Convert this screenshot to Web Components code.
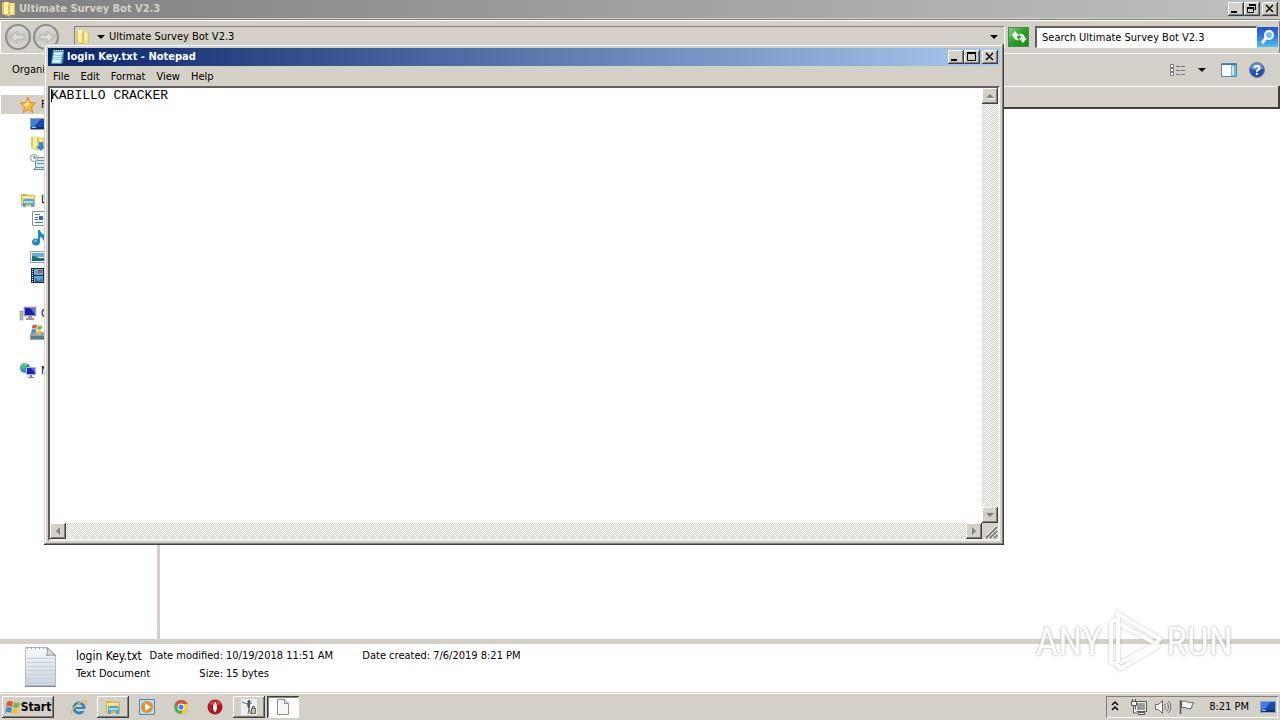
<!DOCTYPE html>
<html lang="en">
<head>
<meta charset="utf-8">
<title>Desktop</title>
<style>
html,body{margin:0;height:100%}
body{font:11px/14px "DejaVu Sans Condensed","Noto Sans",sans-serif;color:#000;background:#fff;overflow:hidden}
</style>
</head>
<body>
<survey-desktop></survey-desktop>
<script>
const FACE='#d4d0c8';
const RAISED='box-shadow:inset -1px -1px #404040,inset 1px 1px #fff,inset -2px -2px #808080;background:'+FACE+';';
const folder='<path fill="#e8c659" d="M1 2l6-1v14l-6-2z"/><path fill="#fbefad" d="M3 1h5v12H3z"/><path fill="#f3dc7c" d="M7 2h7v12H7z"/><path fill="#e3c25a" d="M7 2l2 1v13l-2-1zM13 3h1v11h-1z"/><path fill="#fff6cc" d="M10 4h2v7h-2z"/>';
const library='<path fill="#d9b64a" d="M1 2h6l1 1h7v11H1z"/><path fill="#f9e995" d="M2 4h12v8H2z"/><path fill="#efd566" d="M2 6h12v2H2z"/><path fill="#4da6d8" d="M3 15V9q0-2 2-2h7q2 0 2 2v6h-3v-3H6v3z"/><path fill="#a9def6" d="M4 9h9v2H4z"/>';
const monitor='<path fill="#8ba6c9" d="M0 2h16v12H0z"/><path fill="#1949ad" d="M1 3h14v9H1z"/><path fill="#3c7fe0" d="M1 3h10L3 12H1z"/><path fill="#142d66" d="M1 11h14v2H1z"/><path fill="#9cd0ff" d="M2 11h4v1H2z"/>';
const flagWin='<path fill="#e8542a" d="M2 3q3-2 6 0L7 8Q4 6 1 8z"/><path fill="#7bbb3b" d="M9 3q3 2 6 0l-1 5q-3 2-6 0z"/><path fill="#3d8ddd" d="M1 9q3-2 6 0l-1 5q-3-2-6 0z"/><path fill="#f6c22e" d="M8 9q3 2 6 0l-1 5q-3 2-6 0z"/>';
const ICONS={
 folder,library,monitor,start:flagWin,
 note:'<path fill="#4b98a9" d="M3 1h11l-1 14H1z"/><path fill="#b9e6ee" d="M4 3h9l-1 11H2z"/><path fill="#e3f8fa" d="M5 4h5L9 13H3z"/><path stroke="#8fcbd6" d="M4 6.500h8M4 8.500h8M3 10.500h8"/><path stroke="#fff" stroke-dasharray="1 1" d="M4 1.500h10"/><path fill="#376c88" d="M13 4h1l-1 11h-2z"/>',
 min:'<path fill="#000" d="M3 9h6v2H3z"/>',
 max:'<path fill="none" stroke="#000" d="M3.500 2.500h8v8h-8z"/><path fill="#000" d="M3 2h9v2H3z"/>',
 restore:'<path fill="none" stroke="#000" d="M5.500 2.500h6v5h-2M3.500 5.500h6v5h-6z"/><path fill="#000" d="M5 2h7v2H5zM3 5h7v2H3z"/>',
 close:'<path fill="none" stroke="#000" stroke-width="1.500" d="M4 3l7 7M11 3l-7 7"/>',
 down:'<path fill="#000" d="M4 6h8l-4 4z"/>',
 sup:'<path fill="#808080" d="M4 10h8L8 6z"/><path stroke="#fff" d="M5 10.500h8"/>',
 sdown:'<path fill="#808080" d="M4 6h8l-4 4z"/>',
 sleft:'<path fill="#808080" d="M10 4v8L6 8z"/>',
 sright:'<path fill="#808080" d="M6 4v8l4-4z"/>',
 back:'<path fill="#dddcda" stroke="#b4b2ae" d="M1 8l6-6v4h7v4H7v4z"/>',
 fwd:'<path fill="#dddcda" stroke="#b4b2ae" d="M15 8L9 2v4H2v4h7v4z"/>',
 refresh:'<path fill="#fff" d="M0 7l4-5 4 5H6q0 3 3 4-6 1-7-4zM16 9l-4 5-4-5h2q0-3-3-4 6-1 7 4z"/>',
 search:'<circle cx="9" cy="6" r="4" fill="#7dbbf2" stroke="#fff" stroke-width="2"/><path stroke="#fff" stroke-width="3" d="M6 9l-4 5"/>',
 views:'<path fill="#fff" stroke="#777" d="M.5 2.500h3v3h-3zM.5 6.500h3v3h-3zM.5 10.500h3v3h-3z"/><path stroke="#68798c" stroke-dasharray="4 1" d="M6 4.500h9M6 8.500h9M6 12.500h9"/>',
 pane:'<path fill="#fff" stroke="#5683ad" d="M.5 1.500h15v13H.5z"/><path fill="#3f79b2" d="M1 2h14v1H1z"/><path fill="#73b9dc" d="M10 3h5v11h-5z"/><path fill="#c7e8f5" d="M11 4h2v9h-2z"/>',
 help:'<circle cx="8" cy="8" r="7.500" fill="#2452b4" stroke="#777f9a"/><path fill="#6b95df" d="M2 7a6 6 0 0112 0q-6 2-12 0z"/><path fill="none" stroke="#fff" stroke-width="2" d="M5.500 6q0-2 2.500-2t2.500 2q0 1-1.500 2t-1 2"/><path fill="#fff" d="M7 11h2v2H7z"/>',
 star:'<path fill="#fcc02e" stroke="#e1812b" d="M8 .5l2.200 5 5.300.5-4 4 1.200 5.500L8 12.500l-4.700 3L4.500 10 .5 6l5.300-.5z"/><path fill="#fff0a0" d="M8 3l1 4-3 3-3-3 3-.5z"/>',
 download:folder+'<path fill="#2f8bd2" d="M9 7h4v4h3l-5 5-5-5h3z"/>',
 recent:'<path fill="#d8e6ee" stroke="#6e8493" d="M5.500 3.500h10v9h2v3h-14q3-2 2-4z"/><path stroke="#4d9cc5" d="M7 6.500h7M7 9.500h7M6 13.500h8"/><circle cx="4" cy="4" r="3.500" fill="#f4f8fb" stroke="#8796a5"/><path fill="none" stroke="#555" d="M4 2v2h2"/>',
 doc:'<path fill="#fff" stroke="#7f91b0" d="M2.500 .5h12v14h-12z"/><path stroke="#4b73b4" d="M5 3.500h5M5 6.500h3M5 8.500h3M5 11.500h8"/><path fill="#3567b5" d="M9 5h4v4H9z"/>',
 music:'<ellipse cx="6" cy="12" rx="4" ry="3.500" fill="#2388cc"/><path fill="#2388cc" d="M8 12V0h2q1 4 5 5 2 4-1 8 0-5-4-6v5z"/><path fill="#8fd3f5" d="M4 11q1-2 3-1l-2 2z"/>',
 pic:'<path fill="#fff" stroke="#8aa2b6" d="M.5 2.500h17v11H.5z"/><path fill="#5fb4e6" d="M2 4h14v4H2z"/><path fill="#27785b" d="M2 7q4 0 7 2h7v3H2z"/><path fill="#215f9d" d="M2 10q6-1 14 0v2H2z"/>',
 video:'<path fill="#182c43" d="M1 0h15v15H1z"/><path fill="#68a9d7" d="M4 1h9v6H4zM4 8h9v6H4z"/><path fill="#a95345" d="M8 2h4v3H8z"/><path fill="#2f6fb2" d="M5 9l3 4 4-3v4H5z"/><path stroke="#fff" stroke-dasharray="1 1" d="M2.500 1v13M14.500 1v13"/>',
 computer:'<path fill="#9fb0cf" stroke="#5c6f98" stroke-width=".5" d="M4 1h12v9H4z"/><path fill="#1a1fa6" d="M5 2h10v7H5z"/><path fill="#5c70df" d="M10 2h5v6z"/><path fill="#9a9c9c" d="M8 10h4v2h2v2H6v-2h2z"/><path fill="#aab9a8" stroke="#738070" stroke-width=".5" d="M0 5h3v9H0z"/>',
 disk:'<path fill="#9ba5a8" d="M0 9l2-2h13l2 2v6H0z"/><path fill="#517f8c" d="M1 11h15v3H1z"/><g transform="translate(1 -2) scale(.75)">'+flagWin+'</g>',
 net:'<circle cx="5" cy="5" r="5" fill="#2492c4"/><path fill="#5fbf61" d="M2 1q3-2 5 0L5 5 1 6zM4 7l4-1v3z"/><path fill="#d4e8f6" d="M4 1l2-1 1 2z"/><path fill="#a9b9d9" d="M6 4h10v8H6z"/><path fill="#1726b7" d="M7 5h8v6H7z"/><path fill="#526eea" d="M11 5h4v5z"/><path fill="#6a87ad" d="M10 12h2v2h2v1H8v-1h2z"/>',
 ie:'<circle cx="8" cy="9" r="5" fill="none" stroke="#2686d4" stroke-width="3"/><path fill="#2686d4" d="M4 8h9v2H4z"/><path fill="#d4d0c8" d="M10 10h6v2h-6z"/><path fill="none" stroke="#e9b83c" stroke-width="1.500" d="M1 15Q-1 12 6 6t9-4q1 1-1 4"/>',
 wmp:'<path fill="#bcdcf1" stroke="#3b8dc7" d="M.5 .5h15v15H.5z"/><circle cx="8" cy="8" r="6" fill="#ef8b1d"/><path fill="#fff" d="M6 4l6 4-6 4z"/>',
 chrome:'<circle cx="8" cy="8" r="7" fill="#4caf50"/><path fill="#dd4b3e" d="M2 4.500A7 7 0 0114.500 5H8L5 9z"/><path fill="#f5cb3b" d="M14.500 5A7 7 0 018 15l3-6-1-4z"/><circle cx="8" cy="8" r="3.500" fill="#fff"/><circle cx="8" cy="8" r="2.500" fill="#3f7fd8"/>',
 opera:'<circle cx="8" cy="8" r="7.500" fill="#b51620"/><path fill="#e4404a" d="M2 5q6-7 12 0L8 7z"/><ellipse cx="8" cy="8" rx="2.500" ry="5.500" fill="#f6eded" stroke="#81121a"/>',
 bot:'<path fill="#eee" d="M0 0h16v16H0z"/><path fill="none" stroke="#666" d="M1 3l5 2 5-1M7 6l1 4-1 5M8 10l2 5"/><circle cx="8" cy="2.500" r="1.500" fill="#444"/><path fill="#555" d="M6 4h3v5H7z"/><path fill="#c9c69c" stroke="#666" d="M10.500 9.500h4v5h-4z"/><path fill="none" stroke="#666" d="M11.500 9V7.500h2V9"/>',
 page:'<path fill="#f7f7f5" stroke="#8b8b88" d="M2.500 .5h7l4 4v11h-11z"/><path fill="#ddd" stroke="#8b8b88" d="M9.500 .5v4h4"/>',
 chev:'<path fill="none" stroke="#000" stroke-width="1.500" d="M5 6l3-3 3 3M5 11l3-3 3 3"/>',
 tnet:'<path fill="#f5f5f2" stroke="#555" d="M4.500 2.500h11v10h-11z"/><path fill="#999" d="M6 4h8v7H6z"/><path fill="#f5f5f2" stroke="#555" d="M7.500 13.500h6v2h-6zM.5 2.500h5v4h-5zM2.500 7v7h4M1.500 0v2M4.500 0v2"/>',
 sound:'<path fill="#fff" stroke="#666" d="M.5 5.500h3l4-4v13l-4-4h-3z"/><path fill="none" stroke="#777" d="M9.500 5q2 3 0 6M11.500 3.500q4 4.500 0 9M13.500 2q5 6 0 12"/>',
 flag:'<path fill="#fff" stroke="#666" d="M2.500 2.500q3-1 5 0 2 2 7 1-2 3-2 6-4 1-6-1h-4z"/><path stroke="#555" stroke-width="1.500" d="M1.500 1v14"/>',
 grip:'<path stroke="#808080" stroke-width="2" d="M4 15L15 4M8 15l7-7M12 15l3-3"/><path stroke="#fff" d="M2 15L15 2M6 15l9-9M10 15l5-5"/>'
};
class UiIcon extends HTMLElement{
 connectedCallback(){
  if(this.shadowRoot)return;
  const name=this.getAttribute('name'),h=/^(min|max|restore|close)$/.test(name)?14:16;
  this.attachShadow({mode:'open'}).innerHTML=`<style>:host{display:block;flex:none;width:16px;height:${h}px}svg{display:block;width:100%;height:100%;overflow:visible}</style><svg viewBox="0 0 16 ${h}" aria-hidden="true">${ICONS[name]}</svg>`;
 }}
customElements.define('ui-icon',UiIcon);

const define=(tag,html)=>{
 const t=document.createElement('template');t.innerHTML=html;
 customElements.define(tag,class extends HTMLElement{
  constructor(){super();this.attachShadow({mode:'open'}).append(t.content.cloneNode(true));}
 });
};
const BTN='button{font:inherit;color:inherit;border:0;padding:0;margin:0;display:flex;align-items:center;justify-content:center}';

define('title-bar',`<style>
:host{display:flex;align-items:center;height:18px;padding:0 2px 0 1px;color:#fff;font-weight:bold;background:linear-gradient(90deg,#0a246a,#a6caf0)}
:host([inactive]){color:#d4d0c8;background:linear-gradient(90deg,#808080,#c0c0c0)}
h1{font:inherit;margin:0 auto 0 2px;white-space:nowrap}
${BTN} button{width:16px;height:14px;${RAISED}} button:last-child{margin-left:2px}
.r{display:none}:host([inactive]) .r{display:block}:host([inactive]) .m{display:none}
</style><slot name="icon"></slot><h1><slot></slot></h1>
<button aria-label="Minimize"><ui-icon name="min"></ui-icon></button>
<button aria-label="Resize"><ui-icon class="m" name="max"></ui-icon><ui-icon class="r" name="restore"></ui-icon></button>
<button aria-label="Close"><ui-icon name="close"></ui-icon></button>`);

define('nav-bar',`<style>
:host{display:flex;box-sizing:border-box;height:34px;padding:0 2px 0 4px;align-items:center;background:${FACE};border:solid #fff;border-width:1px 0 1px 1px;box-shadow:inset -1px 0 #808080}
${BTN}
.round{width:26px;height:26px;border-radius:50%;margin-right:2px;border:2px solid #8e8c89;background:linear-gradient(#dedddb,#c4c3c1 50%,#dad9d7)}
.addr{flex:1;display:flex;align-items:center;height:20px;margin:0 3px 0 13px;border:1px solid #808080;border-right-color:#fff;border-bottom-color:#fff}
.addr ui-icon:last-child{margin-left:auto;margin-right:2px}
.addr ui-icon+ui-icon{margin-left:2px}
.go{width:21px;height:20px;background:linear-gradient(135deg,#8dd68b,#23a025 50%,#169318);box-shadow:inset 0 0 0 1px #4b8a4b}
input{font:inherit;width:222px;height:22px;box-sizing:border-box;margin-left:6px;padding:0 0 0 5px;border:1px solid #fff;border-top:2px solid #606060;border-left:2px solid #606060;outline:0;background:#fff;color:#000}
input::placeholder{color:#000;opacity:1}
.find{width:21px;height:20px;background:linear-gradient(#2753ce,#2f7be0 50%,#4cc6ef)}
</style>
<button class="round" aria-label="Back"><ui-icon name="back"></ui-icon></button>
<button class="round" aria-label="Forward"><ui-icon name="fwd"></ui-icon></button>
<div class="addr"><ui-icon name="folder"></ui-icon><ui-icon name="down"></ui-icon><span><slot></slot></span><ui-icon name="down"></ui-icon></div>
<button class="go" aria-label="Refresh"><ui-icon name="refresh"></ui-icon></button>
<input type="text" aria-label="Search" placeholder="Search Ultimate Survey Bot V2.3">
<button class="find" aria-label="Start search"><ui-icon name="search"></ui-icon></button>`);

define('tool-bar',`<style>
:host{display:flex;align-items:center;height:32px;padding:0 15px 0 12px;background:${FACE}}
${BTN} button{background:none}.v{margin-left:auto}.p{margin:0 12px 0 11px}.d{margin-left:8px}
</style><button aria-label="Organize">Organi</button>
<button class="v" aria-label="Views"><ui-icon name="views"></ui-icon></button>
<button class="d" aria-label="More views"><ui-icon name="down"></ui-icon></button>
<button class="p" aria-label="Preview pane"><ui-icon name="pane"></ui-icon></button>
<button aria-label="Help"><ui-icon name="help"></ui-icon></button>`);

define('nav-item',`<style>
:host{display:flex;align-items:center;gap:5px;height:19px;padding-left:19px;white-space:nowrap}
:host([sub]){padding-left:29px}:host([selected]){background:${FACE}}:host([gap]){margin-top:19px}
</style><slot name="icon"></slot><slot></slot>`);

const item=(icon,text,attr='')=>`<nav-item ${attr}><ui-icon slot="icon" name="${icon}"></ui-icon>${text}</nav-item>`;
define('file-explorer',`<style>
:host{display:flex;flex-direction:column;flex:1;min-height:0;background:#fff}
.edge{height:2px;background:linear-gradient(${FACE} 50%,#808080 50%)}
main{flex:1;display:flex;min-height:0}
nav{width:157px;padding:9px 0 0 1px;box-sizing:border-box}
.split{width:3px;background:${FACE}}
.files{flex:1}
.head{height:21px;background:${FACE};border:solid #404040;border-width:0 2px 2px 0;box-shadow:inset 0 1px #fff}
footer{display:flex;align-items:flex-start;box-sizing:border-box;height:54px;padding:0 20px;border-top:5px solid ${FACE};border-bottom:1px solid ${FACE}}
.file{display:block;width:40px;height:44px;margin-right:16px}
dl{display:grid;grid-template-columns:70px 74px max-content 94px max-content;gap:4px 3px;margin:5px 0 0}
dt,dd{margin:0;white-space:nowrap}dt{text-align:right}.name{font-size:12px}
</style>
<title-bar inactive><ui-icon slot="icon" name="folder"></ui-icon>Ultimate Survey Bot V2.3</title-bar>
<div class="edge"></div>
<nav-bar>Ultimate Survey Bot V2.3</nav-bar>
<tool-bar></tool-bar>
<main><nav aria-label="Folders">
${item('star','Favorites','selected')}${item('monitor','','sub aria-label="Desktop"')}${item('download','','sub aria-label="Downloads"')}${item('recent','','sub aria-label="Recent Places"')}
${item('library','Libraries','gap')}${item('doc','','sub aria-label="Documents"')}${item('music','','sub aria-label="Music"')}${item('pic','','sub aria-label="Pictures"')}${item('video','','sub aria-label="Videos"')}
${item('computer','Computer','gap')}${item('disk','','sub aria-label="Local Disk"')}
${item('net','Network','gap')}
</nav><div class="split"></div><div class="files"><div class="head"></div></div></main>
<footer><svg class="file" viewBox="0 0 40 44" aria-hidden="true"><defs><linearGradient id="g" x2="0" y2="1"><stop stop-color="#f6f9fb"/><stop offset="1" stop-color="#cbd4dc"/></linearGradient></defs><path fill="url(#g)" stroke="#b4babf" d="M5.500 3.500h22l8 8v30h-30z"/><path fill="#d7dde2" stroke="#8d959c" d="M26.500 3.500q2 4 0 8 5-1 9 0z"/><path stroke="#c4d1dd" d="M7 14.500h27M7 18.500h27M7 22.500h27M7 26.500h27M7 30.500h27M7 34.500h27M7 38.500h27"/><path stroke="#999" stroke-width="2" stroke-dasharray="1 3" d="M7 4h19"/><path stroke="#7e868c" d="M5 42.500h31"/></svg>
<dl><dd class="name">login Key.txt</dd><dt>Date modified:</dt><dd>10/19/2018 11:51 AM</dd><dt>Date created:</dt><dd>7/6/2019 8:21 PM</dd>
<dd>Text Document</dd><dt>Size:</dt><dd>15 bytes</dd></dl></footer>`);

const DITHER=`background:#fff url("data:image/svg+xml,%3Csvg xmlns='http://www.w3.org/2000/svg' width='2' height='2'%3E%3Cpath fill='%23d4d0c8' d='M0 0h1v1H0zM1 1h1v1H1z'/%3E%3C/svg%3E");`;
define('note-pad',`<style>
:host{display:flex;flex-direction:column;box-sizing:border-box;padding:4px;background:${FACE};box-shadow:inset -1px -1px #404040,inset 1px 1px #d4d0c8,inset -2px -2px #808080,inset 2px 2px #fff}
${BTN}
title-bar{padding-left:2px}
title-bar ui-icon{margin-right:-1px}
menu{display:flex;gap:11px;align-items:flex-end;height:18px;margin:0;padding:0 5px 2px}menu button{background:none}
.edit{flex:1;display:grid;grid-template:1fr 16px/1fr 16px;border:2px solid;border-color:#606060 #f4f2ee #f4f2ee #606060;min-height:0;position:relative}
textarea{font:13px/14px "Liberation Mono",monospace;border:0;outline:0;resize:none;margin:0;padding:1px;background:#fff;color:#000;overflow:hidden}
.caret{position:absolute;left:1px;top:1px;width:1px;height:13px;background:#000}
.bar{display:flex;justify-content:space-between;${DITHER}}.v{flex-direction:column}
.bar button{width:16px;height:16px;${RAISED}}
</style>
<title-bar><ui-icon slot="icon" name="note"></ui-icon>login Key.txt - Notepad</title-bar>
<menu><button>File</button><button>Edit</button><button>Format</button><button>View</button><button>Help</button></menu>
<div class="edit"><textarea aria-label="Text" spellcheck="false">KABILLO CRACKER</textarea>
<div class="bar v"><button aria-label="Scroll up"><ui-icon name="sup"></ui-icon></button><button aria-label="Scroll down"><ui-icon name="sdown"></ui-icon></button></div>
<div class="bar"><button aria-label="Scroll left"><ui-icon name="sleft"></ui-icon></button><button aria-label="Scroll right"><ui-icon name="sright"></ui-icon></button></div>
<ui-icon name="grip"></ui-icon><i class="caret"></i></div>`);

define('task-bar',`<style>
:host{display:flex;align-items:center;height:27px;padding:0 2px;background:${FACE};box-shadow:inset 0 1px #fff}
${BTN} button{width:32px;height:22px;margin-right:2px;background:none}
.up{${RAISED}}
button.start{width:52px;font-weight:bold;font-size:12px;margin-right:9px}
button.on{background:#fff;box-shadow:inset 1px 1px #404040,inset -1px -1px #fff,inset 2px 2px #808080}
.tray{display:flex;align-items:center;height:22px;margin-left:auto;box-sizing:border-box;padding:0 2px 0 1px;gap:8px;box-shadow:inset 1px 1px #808080,inset -1px -1px #fff}
time{margin:0 3px 0 6px;white-space:nowrap}
</style>
<button class="up start"><ui-icon name="start"></ui-icon>Start</button>
<button aria-label="Internet Explorer"><ui-icon name="ie"></ui-icon></button>
<button class="up" aria-label="Explorer"><ui-icon name="library"></ui-icon></button>
<button aria-label="Media Player"><ui-icon name="wmp"></ui-icon></button>
<button aria-label="Chrome"><ui-icon name="chrome"></ui-icon></button>
<button aria-label="Opera"><ui-icon name="opera"></ui-icon></button>
<button class="up" aria-label="Survey Bot"><ui-icon name="bot"></ui-icon></button>
<button class="on" aria-label="Notepad"><ui-icon name="page"></ui-icon></button>
<div class="tray"><ui-icon name="chev"></ui-icon><ui-icon name="tnet"></ui-icon><ui-icon name="sound"></ui-icon><ui-icon name="flag"></ui-icon><time>8:21 PM</time><ui-icon name="monitor"></ui-icon></div>`);

define('water-mark',`<style>
:host{display:flex;align-items:center;font:39px/64px "Roboto Condensed","Roboto",sans-serif;color:#fff;opacity:.85;text-shadow:0 0 2px #aaa,0 0 3px #bbb;pointer-events:none}
svg{width:60px;height:64px;margin:0 2px;filter:drop-shadow(0 0 1px #aaa)}
</style><span>ANY</span><svg viewBox="0 0 60 64" aria-hidden="true"><path fill="none" stroke="#fff" stroke-width="4" d="M13 9l-6 3v40l9 5M14 53V4l42 25-4 4M16 14l36 20-36 19M14 60l42-25"/></svg><span>RUN</span>`);

define('survey-desktop',`<style>
:host{display:flex;flex-direction:column;height:100vh;position:relative;overflow:hidden}
note-pad{position:absolute;left:44px;top:44px;width:75%;height:501px}
water-mark{position:absolute;right:47px;bottom:46px}
</style><file-explorer></file-explorer><task-bar></task-bar><note-pad></note-pad><water-mark></water-mark>`);
</script>
</body>
</html>
